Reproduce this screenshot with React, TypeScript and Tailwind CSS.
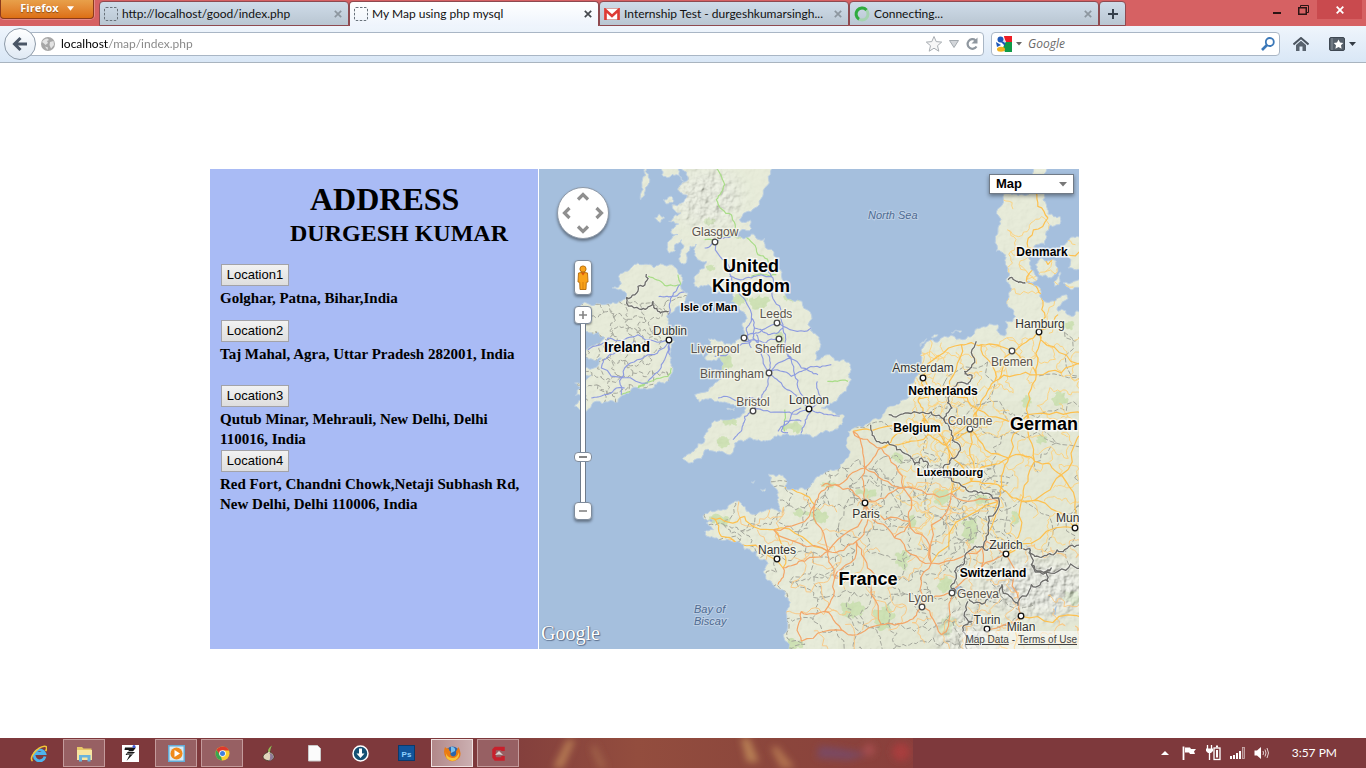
import { useState } from "react";
import type { ReactNode } from "react";

type Pt = [number, number];

/* ---------- map geometry ---------- */

function makeRandom(seed: number) {
  let s = seed;
  return () => {
    s = (s * 16807) % 2147483647;
    return s / 2147483647;
  };
}

function roughen(points: Pt[], amount: number, seed: number, depth: number): Pt[] {
  const rnd = makeRandom(seed * 7919 + 13);
  let pts = points;
  for (let d = 0; d < depth; d++) {
    const next: Pt[] = [];
    for (let i = 0; i < pts.length - 1; i++) {
      const [ax, ay] = pts[i];
      const [bx, by] = pts[i + 1];
      const len = Math.hypot(bx - ax, by - ay);
      const k = (rnd() - 0.5) * amount;
      next.push(pts[i]);
      if (len > 5 && len < 500) next.push([(ax + bx) / 2 - (by - ay) * k, (ay + by) / 2 + (bx - ax) * k]);
    }
    next.push(pts[pts.length - 1]);
    pts = next;
  }
  return pts;
}

const parse = (text: string): Pt[] =>
  text.split(" ").map((pair) => pair.split(",").map(Number) as Pt);

const toPath = (pts: Pt[]) => "M" + pts.map((p) => p[0].toFixed(1) + " " + p[1].toFixed(1)).join("L");

const coast = (text: string, seed: number) => {
  const pts = parse(text);
  return toPath(roughen([...pts, pts[0]], 0.5, seed, 3)) + "Z";
};

const line = (text: string, seed: number, amount = 0.3) => toPath(roughen(parse(text), amount, seed, 3));

const LAND = [
  "430,-10 445,40 420,60 448,82 402,110 428,135 392,160 422,168 398,192 420,200 388,228 395,255 412,248 430,215 438,235 428,285 446,282 456,235 475,228 470,262 505,280 500,300 470,325 480,360 510,350 540,375 575,370 592,366 580,400 612,430 628,450 612,470 618,500 580,530 545,520 512,512 518,532 536,545 500,570 542,568 552,600 540,640 470,680 485,702 520,692 560,702 600,708 628,705 620,735 580,755 530,758 512,780 500,820 470,845 434,872 465,885 500,846 540,850 570,860 590,825 640,810 670,820 700,815 720,800 760,803 800,800 840,800 880,790 912,770 918,742 880,728 850,720 895,700 925,670 940,635 938,600 918,574 868,560 832,577 846,540 835,500 810,470 792,400 742,380 730,320 715,270 680,210 640,198 592,206 640,182 637,156 604,156 650,120 680,60 700,-10",
  "330,290 350,298 400,290 430,320 428,355 450,375 440,410 400,435 386,445 390,480 410,520 400,570 405,600 390,640 350,650 300,660 260,680 210,702 150,724 110,715 145,690 112,682 140,655 110,645 160,620 130,610 190,570 140,570 150,540 200,510 180,492 130,480 135,460 125,440 140,402 200,410 250,400 265,385 222,360 250,345 245,320 275,305 310,290",
  "498,1040 540,1025 575,1010 610,1005 625,1030 660,1035 690,1025 730,1030 720,1000 712,960 692,918 735,922 740,955 770,965 810,960 830,935 870,910 920,880 932,845 930,790 960,775 995,765 1040,735 1060,715 1100,695 1112,650 1150,600 1150,548 1170,520 1220,505 1290,505 1310,490 1330,478 1380,470 1386,500 1404,500 1402,460 1424,460 1428,430 1410,395 1420,360 1405,340 1410,300 1405,270 1375,250 1380,180 1376,130 1400,70 1430,78 1470,80 1498,-10 1537,-10 1530,50 1525,110 1530,138 1566,145 1560,170 1525,190 1520,230 1480,245 1475,290 1500,328 1462,345 1500,355 1510,390 1550,400 1585,380 1590,392 1560,430 1600,445 1640,430 1700,430 1700,1000 1700,1500 1200,1500 745,1500 745,1460 746,1342 750,1290 738,1268 702,1245 676,1210 690,1186 656,1165 655,1150 620,1145 580,1120 530,1110 500,1090 526,1085 505,1065 532,1060 500,1055",
  "1492,290 1510,270 1555,280 1560,310 1530,330 1505,322",
  "1575,240 1595,212 1640,210 1640,302 1590,300",
  "1575,345 1640,335 1640,368 1600,365",
  "1550,340 1568,312 1562,350 1550,355",
  "318,-10 332,30 322,60 308,96 312,52",
  "350,150 365,138 380,150 366,164",
  "375,95 400,85 408,98 385,108",
  "436,40 415,20 372,20 380,-10 420,-10",
  "566,722 590,720 588,729",
  "640,942 650,938 646,946",
  "668,964 682,962 680,970",
  "1146,535 1152,522 1166,512 1160,522",
  "1180,508 1200,500 1196,506",
  "1240,494 1270,488 1268,493",
].map((text, i) => coast(text, i + 3));

const LAKES = "M1232 1268Q1250 1250 1275 1256Q1262 1268 1240 1272ZM1462 1130L1480 1140L1474 1146ZM1545 1330L1556 1312L1552 1342Z";

const CITIES: Record<string, Pt> = {
  paris: [982, 1007], lille: [1030, 840], calais: [945, 790], reims: [1095, 960], metz: [1240, 975],
  lyon: [1152, 1315], dijon: [1180, 1185], orleans: [955, 1120], lemans: [870, 1150], rennes: [707, 1085],
  nantes: [735, 1200], caen: [830, 1010], rouen: [890, 950], tours: [890, 1230], poitiers: [860, 1330],
  brest: [520, 1050], bordeaux: [790, 1420], clermont: [1030, 1370], limoges: [930, 1400], auxerre: [1070, 1110],
  troyes: [1115, 1060], brussels: [1170, 800], cologne: [1298, 785], ruhr: [1320, 725], frankfurt: [1412, 870],
  stuttgart: [1450, 1000], munich: [1612, 1080], zurich: [1405, 1160], bern: [1330, 1200], geneva: [1242, 1275],
  milan: [1450, 1345], turin: [1348, 1385], genoa: [1430, 1450], east: [1640, 1350], hamburg: [1504, 493],
  bremen: [1422, 548], hannover: [1495, 620], amsterdam: [1156, 628], rotterdam: [1140, 695], utrecht: [1190, 665],
  groningen: [1270, 530], arnhem: [1240, 680], leipzig: [1640, 740], kassel: [1470, 740], nuremberg: [1570, 920],
  strasbourg: [1382, 1000], basel: [1345, 1120], karlsruhe: [1390, 960], berlin: [1640, 590], lubeck: [1560, 440],
  quimper: [550, 1105], stbrieuc: [620, 1045], cherbourg: [740, 958], amiens: [980, 900], bourges: [1010, 1220],
  lehavre: [850, 955], angers: [800, 1180], laroche: [720, 1250], osnabruck: [1370, 640], emden: [1330, 530],
  wurzburg: [1490, 880], saar: [1300, 940], liege: [1225, 830], gent: [1100, 790], antwerp: [1160, 750],
  coast: [790, 1330], grenoble: [1210, 1400], stetienne: [1110, 1360], kiel: [1515, 400], flensburg: [1465, 340],
  kolding: [1470, 240], aarhus: [1530, 150], aalborg: [1490, 70], odense: [1530, 290], copenhagen: [1640, 250],
};

const TRUNK = "lille-amiens lille-calais amiens-paris paris-reims reims-metz reims-lille paris-rouen rouen-lehavre rouen-caen paris-orleans orleans-tours tours-poitiers poitiers-coast paris-lemans lemans-rennes lemans-angers angers-nantes lemans-tours orleans-bourges bourges-clermont paris-auxerre auxerre-dijon dijon-lyon dijon-troyes troyes-reims troyes-paris dijon-metz lyon-geneva lyon-stetienne stetienne-clermont lyon-grenoble clermont-limoges limoges-poitiers caen-lemans amiens-rouen amiens-reims metz-strasbourg dijon-basel coast-bordeaux limoges-bordeaux rennes-caen nantes-laroche orleans-lemans troyes-auxerre calais-amiens geneva-grenoble geneva-bern bern-zurich bern-basel basel-zurich zurich-milan turin-milan tours-bourges";

const SECONDARY = "brussels-lille brussels-antwerp brussels-liege liege-cologne gent-lille gent-antwerp antwerp-rotterdam rotterdam-amsterdam amsterdam-utrecht utrecht-arnhem arnhem-ruhr utrecht-rotterdam amsterdam-groningen groningen-emden emden-bremen emden-osnabruck ruhr-cologne ruhr-osnabruck osnabruck-bremen bremen-hamburg hamburg-hannover hannover-osnabruck hannover-kassel kassel-frankfurt ruhr-kassel cologne-frankfurt frankfurt-wurzburg wurzburg-nuremberg nuremberg-munich stuttgart-munich stuttgart-karlsruhe karlsruhe-frankfurt karlsruhe-strasbourg strasbourg-basel stuttgart-wurzburg nuremberg-leipzig leipzig-kassel hannover-berlin hamburg-berlin hamburg-lubeck hamburg-kiel kiel-flensburg flensburg-kolding kolding-aarhus aarhus-aalborg kolding-odense odense-copenhagen metz-saar saar-karlsruhe metz-liege liege-saar cologne-saar munich-zurich milan-genoa milan-east turin-genoa zurich-stuttgart brest-stbrieuc stbrieuc-rennes rennes-nantes brest-quimper quimper-nantes cherbourg-caen rennes-lemans wurzburg-kassel bremen-hannover arnhem-groningen liege-antwerp liege-ruhr gent-calais berlin-leipzig frankfurt-saar stuttgart-nuremberg strasbourg-dijon";

const routes = (text: string, seed: number) =>
  text
    .split(" ")
    .map((edge, i) => {
      const [a, b] = edge.split("-");
      return toPath(roughen([CITIES[a], CITIES[b]], 0.35, seed + i, 3));
    })
    .join("");

const TRUNK_PATH = routes(TRUNK, 40);
const SECONDARY_PATH = routes(SECONDARY, 200);

function mesh(x0: number, y0: number, x1: number, y1: number, step: number, keep: number, seed: number) {
  const rnd = makeRandom(seed);
  const cols = Math.ceil((x1 - x0) / step);
  const rows = Math.ceil((y1 - y0) / step);
  const nodes: Pt[][] = [];
  for (let r = 0; r <= rows; r++) {
    nodes.push([]);
    for (let c = 0; c <= cols; c++) {
      nodes[r].push([x0 + (c + (r % 2) * 0.5 + (rnd() - 0.5) * 0.7) * step, y0 + (r + (rnd() - 0.5) * 0.7) * step]);
    }
  }
  let d = "";
  for (let r = 0; r < rows; r++) {
    for (let c = 0; c < cols; c++) {
      if (rnd() < keep) d += toPath(roughen([nodes[r][c], nodes[r][c + 1]], 0.7, seed + r * 31 + c, 3));
      if (rnd() < keep) d += toPath(roughen([nodes[r][c], nodes[r + 1][c]], 0.7, seed + r * 37 + c + 5, 3));
    }
  }
  return d;
}

const COUNTIES =
  mesh(470, 920, 1390, 1440, 74, 0.72, 91) +
  mesh(130, 400, 400, 700, 44, 0.8, 17) +
  mesh(1150, 500, 1640, 1150, 110, 0.6, 55) +
  mesh(960, 780, 1400, 1000, 90, 0.6, 71);

const MINOR_ROADS =
  mesh(1080, 520, 1640, 1110, 48, 0.5, 23) +
  mesh(1130, 560, 1330, 880, 30, 0.45, 29) +
  mesh(1400, 60, 1560, 480, 60, 0.5, 83);
const MINOR_TRUNKS = mesh(500, 960, 1300, 1440, 70, 0.45, 47) + mesh(1300, 1130, 1640, 1440, 50, 0.45, 63);

const BRITISH_ROADS = [
  "530,222 575,300 600,370 640,450 645,510 690,610", "500,240 530,222 585,200", "575,325 640,330 700,325",
  "690,290 705,330 710,400 735,470 742,530 770,620 800,690", "620,510 660,495 716,465 800,490 830,480",
  "620,520 680,525 723,513", "640,450 625,480 640,540", "690,610 760,570 735,540", "650,480 690,500 735,480",
  "690,610 685,660 670,690 650,725 620,745 612,780 585,815", "690,610 740,660 790,700 820,725",
  "645,725 730,732 820,722", "820,725 870,740 905,745", "820,722 850,690 838,640", "820,722 800,770 790,795",
  "790,760 740,760 730,790 750,795", "790,720 760,740 720,790", "670,690 610,700 540,690", "740,530 790,600 840,620",
  "530,565 590,545 640,520", "655,500 655,540 690,560 690,610", "690,610 760,625 810,600 880,590",
  "395,517 300,500 210,510 150,545", "395,517 340,560 260,600 250,680", "395,517 370,590 330,640", "330,645 190,600 215,560 290,520",
  "390,450 402,385 425,350", "402,385 362,386", "402,385 440,372", "395,517 395,560", "160,690 200,680 260,660",
].map((t, i) => line(t, i + 400)).join("");

const PRIMARY_GREEN = [
  "520,-10 560,50 535,95 580,140 592,200", "620,198 660,260 705,300", "330,325 380,352 430,350 420,320",
  "640,325 715,320", "300,655 390,625 400,600", "868,640 930,640", "740,725 740,790", "250,680 300,660 330,640", "600,205 500,215",
].map((t, i) => line(t, i + 600)).join("");

const FRONTIERS = [
  "998,770 1010,810 1050,820 1110,860 1130,890 1150,870 1170,905 1210,920 1240,930 1285,965 1320,975 1382,990 1350,1070 1336,1140 1300,1145 1280,1180 1250,1210 1240,1262",
  "1052,740 1110,735 1180,732 1220,760 1240,800 1258,825 1240,870 1215,900 1240,930",
  "1315,520 1302,590 1280,610 1302,622 1290,650 1235,685 1242,720 1220,760",
  "1336,1140 1380,1130 1430,1136 1475,1142 1480,1190 1540,1200 1530,1240 1480,1250 1440,1312 1420,1288 1392,1250 1360,1290 1300,1300 1285,1270 1240,1262",
  "1475,1142 1500,1165 1540,1160 1580,1145 1640,1130",
  "1480,1190 1560,1210 1640,1200",
  "1290,1300 1302,1360 1275,1390 1290,1460",
  "1410,335 1435,340 1462,346",
  "325,318 300,355 265,388 310,425 345,400 360,430 392,430",
].map((t, i) => line(t, i + 800, 0.6)).join("");

const WOODS: [number, number, number, number][] = [
  [600, 395, 30, 18], [665, 400, 32, 20], [765, 390, 28, 16], [515, 160, 18, 12], [560, 580, 20, 26], [575, 763, 22, 12],
  [555, 823, 18, 18], [765, 780, 30, 14], [518, 300, 14, 10], [725, 510, 14, 18], [545, 1055, 34, 14], [600, 205, 14, 8],
  [845, 1045, 28, 20], [1080, 870, 18, 14], [1215, 985, 22, 30], [1300, 1085, 22, 40], [1095, 1175, 18, 30],
  [945, 1325, 34, 28], [1040, 1350, 30, 34], [1230, 1375, 26, 34], [1220, 1250, 20, 24], [980, 975, 36, 14],
  [1510, 815, 16, 14], [1565, 690, 24, 22], [1600, 1290, 30, 20], [790, 1035, 26, 12], [1330, 995, 24, 14],
  [1120, 1060, 16, 18], [770, 1430, 30, 14], [1430, 1050, 14, 20], [1590, 470, 20, 14], [1465, 700, 16, 20], [870, 950, 24, 10],
];

const WOODS_PATH = WOODS.map(([cx, cy, rx, ry], i) => {
  const ring: Pt[] = [];
  for (let k = 0; k <= 8; k++) {
    const a = (k / 8) * Math.PI * 2;
    ring.push([cx + Math.cos(a) * rx, cy + Math.sin(a) * ry]);
  }
  return toPath(roughen(ring, 1, i + 900, 2)) + "Z";
}).join("");

/* ---------- map labels ---------- */

const CITY_LABELS: { name: string; x: number; y: number; dot: Pt; strong?: boolean }[] = [
  { name: "Glasgow", x: 176, y: 67, dot: [176, 73] },
  { name: "Leeds", x: 237, y: 149, dot: [238, 154] },
  { name: "Liverpool", x: 176, y: 184, dot: [205, 169] },
  { name: "Sheffield", x: 239, y: 184, dot: [240, 170] },
  { name: "Birmingham", x: 193, y: 209, dot: [230, 204] },
  { name: "Bristol", x: 214, y: 237, dot: [214, 242] },
  { name: "London", x: 270, y: 235, dot: [270, 240], strong: true },
  { name: "Dublin", x: 131, y: 166, dot: [130, 171], strong: true },
  { name: "Hamburg", x: 501, y: 159, dot: [500, 163], strong: true },
  { name: "Bremen", x: 473, y: 197, dot: [473, 182] },
  { name: "Amsterdam", x: 384, y: 203, dot: [384, 209], strong: true },
  { name: "Cologne", x: 431, y: 256, dot: [431, 260] },
  { name: "Paris", x: 327, y: 349, dot: [326, 334], strong: true },
  { name: "Nantes", x: 238, y: 385, dot: [238, 390], strong: true },
  { name: "Zurich", x: 467, y: 380, dot: [467, 385], strong: true },
  { name: "Geneva", x: 439, y: 429, dot: [413, 424] },
  { name: "Lyon", x: 382, y: 433, dot: [383, 438] },
  { name: "Turin", x: 448, y: 455, dot: [448, 460], strong: true },
  { name: "Milan", x: 482, y: 462, dot: [482, 447], strong: true },
];

const COUNTRY_LABELS: { name: string; x: number; y: number; size: string }[] = [
  { name: "United", x: 212, y: 103, size: "text-[18px]" },
  { name: "Kingdom", x: 212, y: 123, size: "text-[18px]" },
  { name: "France", x: 329, y: 416, size: "text-[18px]" },
  { name: "Ireland", x: 88, y: 183, size: "text-[14px]" },
  { name: "Isle of Man", x: 170, y: 142, size: "text-[11px]" },
  { name: "Denmark", x: 503, y: 87, size: "text-[12px]" },
  { name: "Netherlands", x: 404, y: 226, size: "text-[12px]" },
  { name: "Belgium", x: 378, y: 263, size: "text-[12px]" },
  { name: "Luxembourg", x: 411, y: 307, size: "text-[11px]" },
  { name: "Switzerland", x: 454, y: 408, size: "text-[12px]" },
];

function MapArt() {
  return (
    <svg viewBox="0 0 540 480" preserveAspectRatio="xMinYMin slice" className="block h-full w-full font-['Liberation_Sans',sans-serif]" role="img" aria-label="Road map of western Europe">
      <defs>
        <clipPath id="land">
          {LAND.map((d, i) => (
            <path key={i} d={d} />
          ))}
        </clipPath>
        <filter id="relief" x="0" y="0" width="100%" height="100%">
          <feTurbulence type="fractalNoise" baseFrequency="0.05" numOctaves="4" seed="4" />
          <feDiffuseLighting surfaceScale="9" lightingColor="#ffffff">
            <feDistantLight azimuth="225" elevation="48" />
          </feDiffuseLighting>
        </filter>
        <radialGradient id="fade">
          <stop offset="0.4" stopColor="#fff" />
          <stop offset="1" stopColor="#000" />
        </radialGradient>
        <mask id="mountains">
          <rect width="1640" height="1460" fill="#fff" opacity="0.08" />
          <ellipse cx="1510" cy="1260" rx="250" ry="125" fill="url(#fade)" />
          <ellipse cx="510" cy="90" rx="140" ry="120" fill="url(#fade)" opacity="0.6" />
          <ellipse cx="1280" cy="1400" rx="120" ry="120" fill="url(#fade)" opacity="0.7" />
        </mask>
      </defs>
      <rect width="540" height="480" fill="#a5bfdd" />
      <g transform="translate(-1 -1) scale(0.33333)" fill="none" strokeLinejoin="round">
        {LAND.map((d, i) => (
          <path key={i} d={d} fill="#e7ecd9" stroke="#bccfe2" strokeWidth="3" />
        ))}
        <g clipPath="url(#land)">
          <rect x="900" y="700" width="760" height="760" fill="#e2e6d0" opacity="0.6" />
          <path d={WOODS_PATH} fill="#c8dfab" opacity="0.85" />
          <g mask="url(#mountains)">
            <rect x="0" y="0" width="1640" height="1460" filter="url(#relief)" opacity="0.6" />
          </g>
          <path d={LAKES} fill="#a5bfdd" />
          <path d={COUNTIES} stroke="#a4a69c" strokeWidth="3" strokeDasharray="14 6" />
          <path d={MINOR_ROADS} stroke="#fbd383" strokeWidth="3" />
          <path d={MINOR_TRUNKS} stroke="#f8c988" strokeWidth="3" />
          <path d={SECONDARY_PATH} stroke="#fdc04f" strokeWidth="3.6" />
          <path d={TRUNK_PATH} stroke="#f3a568" strokeWidth="3.6" />
          <path d={PRIMARY_GREEN} stroke="#a9dd88" strokeWidth="3.6" />
          <path d={BRITISH_ROADS} stroke="#8d9be0" strokeWidth="3.4" />
          <path d={FRONTIERS} stroke="#fff" strokeWidth="8" opacity="0.5" />
          <path d={FRONTIERS} stroke="#6d6d6a" strokeWidth="4" />
        </g>
      </g>
      {CITY_LABELS.map((c) => (
        <g key={c.name}>
          <circle cx={c.dot[0]} cy={c.dot[1]} r="2.8" fill="#fff" stroke={c.strong ? "#111" : "#444"} strokeWidth="1.3" />
          <text x={c.x} y={c.y} textAnchor="middle" paintOrder="stroke" stroke="#f7f8ee" strokeOpacity="0.8" strokeWidth="2.5" fill={c.strong ? "#333" : "#5b544e"} className="text-[12px]">
            {c.name}
          </text>
        </g>
      ))}
      <circle cx="536" cy="359" r="2.8" fill="#fff" stroke="#111" strokeWidth="1.3" />
      <text x="517" y="353" paintOrder="stroke" stroke="#f7f8ee" strokeOpacity="0.8" strokeWidth="2.5" fill="#333" className="text-[12px]">
        Mun
      </text>
      {COUNTRY_LABELS.map((c) => (
        <text key={c.name} x={c.x} y={c.y} textAnchor="middle" paintOrder="stroke" stroke="#fff" strokeOpacity="0.75" strokeWidth="3" fill="#000" className={"font-bold " + c.size}>
          {c.name}
        </text>
      ))}
      <text x="471" y="261" paintOrder="stroke" stroke="#fff" strokeOpacity="0.75" strokeWidth="3" fill="#000" className="text-[18px] font-bold">
        German
      </text>
      <g fill="#4f6b92" stroke="#c3d4e8" strokeOpacity="0.8" strokeWidth="2" paintOrder="stroke" className="text-[11px] italic">
        <text x="329" y="50">North Sea</text>
        <text x="155" y="444">Bay of</text>
        <text x="155" y="456">Biscay</text>
      </g>
    </svg>
  );
}

/* ---------- map controls ---------- */

function PanButton({ label, d, place }: { label: string; d: string; place: string }) {
  return (
    <button aria-label={label} className={"flex items-center justify-center " + place}>
      <svg viewBox="0 0 14 14" className="size-3.5">
        <path d={d} fill="none" stroke="#8f8f8f" strokeWidth="3.2" />
      </svg>
    </button>
  );
}

function MapPanel() {
  const [zoom, setZoom] = useState(5);
  return (
    <section aria-label="Map" className="relative min-w-0 flex-1 overflow-hidden font-['Liberation_Sans',sans-serif]">
      <MapArt />
      <div className="absolute top-[18px] left-[18px] flex w-[52px] flex-col items-center">
        <div className="grid size-[52px] grid-cols-3 grid-rows-3 rounded-full border border-[#8f9aa8] bg-white p-px shadow-[0_2px_3px_rgba(0,0,0,0.4)]">
          <PanButton label="Pan up" d="M2 9.5L7 4.5L12 9.5" place="col-start-2 row-start-1" />
          <PanButton label="Pan left" d="M9.5 2L4.5 7L9.5 12" place="col-start-1 row-start-2" />
          <PanButton label="Pan right" d="M4.5 2L9.5 7L4.5 12" place="col-start-3 row-start-2" />
          <PanButton label="Pan down" d="M2 4.5L7 9.5L12 4.5" place="col-start-2 row-start-3" />
        </div>
        <button aria-label="Street View" className="mt-[21px] flex h-[35px] w-[18px] items-center justify-center rounded-sm border border-[#7f8c9c] bg-white shadow-[0_2px_3px_rgba(0,0,0,0.4)]">
          <svg viewBox="0 0 12 26" className="h-[26px] w-3">
            <g fill="#f9a31a" stroke="#b36a08" strokeWidth="0.9">
              <path d="M1.5 8Q6 6.500 10.500 8L11 17L9.300 17.300L9 24.500H3L2.700 17.300L1 17Z" />
              <circle cx="6" cy="4" r="3.100" />
            </g>
            <path d="M4 7.800L6 10.500L8 7.800Z" fill="#d9570b" />
            <path d="M6 17V24.500" stroke="#d27a0b" strokeWidth="0.800" />
          </svg>
        </button>
        <button aria-label="Zoom in" onClick={() => setZoom(Math.min(21, zoom + 1))} className="mt-[11px] flex size-[18px] items-center justify-center rounded-sm border border-[#7f8c9c] bg-white shadow-[0_1px_2px_rgba(0,0,0,0.4)]">
          <svg viewBox="0 0 8 8" className="size-2">
            <path d="M4 0V8M0 4H8" stroke="#858585" strokeWidth="1.600" />
          </svg>
        </button>
        <input
          type="range"
          aria-label="Zoom level"
          min={0}
          max={21}
          value={zoom}
          onChange={(e) => setZoom(Number(e.target.value))}
          className="h-[178px] w-[18px] appearance-none bg-[linear-gradient(90deg,#6f7b8b_1px,#fff_1px,#fff_5px,#6f7b8b_5px)] bg-[length:6px_100%] bg-center bg-no-repeat [direction:rtl] [writing-mode:vertical-lr] [&::-webkit-slider-thumb]:h-2.5 [&::-webkit-slider-thumb]:w-[18px] [&::-webkit-slider-thumb]:appearance-none [&::-webkit-slider-thumb]:rounded-sm [&::-webkit-slider-thumb]:border [&::-webkit-slider-thumb]:border-[#7f8c9c] [&::-webkit-slider-thumb]:bg-white [&::-webkit-slider-thumb]:bg-[linear-gradient(#858585,#858585)] [&::-webkit-slider-thumb]:bg-[length:8px_2px] [&::-webkit-slider-thumb]:bg-center [&::-webkit-slider-thumb]:bg-no-repeat"
        />
        <button aria-label="Zoom out" onClick={() => setZoom(Math.max(0, zoom - 1))} className="flex size-[18px] items-center justify-center rounded-sm border border-[#7f8c9c] bg-white shadow-[0_2px_3px_rgba(0,0,0,0.4)]">
          <svg viewBox="0 0 8 8" className="size-2">
            <path d="M0 4H8" stroke="#858585" strokeWidth="1.600" />
          </svg>
        </button>
      </div>
      <div className="absolute top-[5px] right-[5px] flex h-5 w-[85px] items-center border border-[#717b87] bg-white shadow-[0_2px_4px_rgba(0,0,0,0.4)]">
        <select aria-label="Map type" className="h-full w-full appearance-none bg-transparent pl-1.5 text-[13px] leading-4 font-bold text-black">
          <option>Map</option>
        </select>
        <svg viewBox="0 0 8 5" className="pointer-events-none absolute right-1.5 h-[5px] w-2">
          <path d="M0 0H8L4 4.500Z" fill="#777" />
        </svg>
      </div>
      <span className="absolute bottom-1 left-0.5 font-['Liberation_Serif',serif] text-[20px] leading-6 text-white [text-shadow:0_0_1px_#4a5d78,1px_1px_1px_#5c6f8c]">Google</span>
      <div className="absolute right-0 bottom-0 flex gap-[3px] bg-white/50 px-0.5 text-[10px] leading-[18px] text-[#444]">
        <a href="#map-data" className="underline">Map Data</a>
        <span>-</span>
        <a href="#terms" className="underline">Terms of Use</a>
      </div>
    </section>
  );
}

/* ---------- address panel ---------- */

const PLACES = [
  { button: "Location1", address: "Golghar, Patna, Bihar,India", box: "min-h-14" },
  { button: "Location2", address: "Taj Mahal, Agra, Uttar Pradesh 282001, India", box: "min-h-[65px]" },
  { button: "Location3", address: "Qutub Minar, Mehrauli, New Delhi, Delhi 110016, India", box: "min-h-[65px]" },
  { button: "Location4", address: "Red Fort, Chandni Chowk,Netaji Subhash Rd, New Delhi, Delhi 110006, India", box: "min-h-[65px]" },
];

function AddressPanel() {
  return (
    <section className="w-[328px] shrink-0 bg-[#a9bbf5] pt-3 pr-2 pl-2.5 font-['Liberation_Serif',serif] font-bold text-black">
      <h1 className="pl-[90px] text-[32px] leading-9">ADDRESS</h1>
      <h2 className="pl-[70px] text-[24px] leading-8 whitespace-nowrap">DURGESH KUMAR</h2>
      <ul className="pt-[15px]">
        {PLACES.map((p) => (
          <li key={p.button} className={p.box}>
            <button className="ml-px flex h-[22px] w-[68px] items-center justify-center border border-[#a3a3a8] bg-linear-to-b from-[#f2f2f2] to-[#dedede] font-['Liberation_Sans',sans-serif] text-[13px] font-normal">
              {p.button}
            </button>
            <p className="pt-0.5 text-[15px] leading-5">{p.address}</p>
          </li>
        ))}
      </ul>
    </section>
  );
}

/* ---------- browser chrome ---------- */

function BlankIcon() {
  return (
    <svg viewBox="0 0 14 14" className="size-3.5 shrink-0">
      <rect x="0.500" y="0.500" width="13" height="13" rx="1.500" fill="none" stroke="#6a737c" strokeDasharray="2.500 1.500" />
    </svg>
  );
}

function GmailIcon() {
  return (
    <svg viewBox="0 0 16 12" className="h-3 w-4 shrink-0">
      <rect x="0.500" y="0.500" width="15" height="11" fill="#fff" stroke="#d9a3a0" />
      <path d="M1.500 12V2L8 8L14.500 2V12" fill="none" stroke="#dd3b35" strokeWidth="2.600" />
    </svg>
  );
}

function SpinnerIcon() {
  return (
    <svg viewBox="0 0 16 16" className="size-4 shrink-0" fill="none" strokeWidth="3">
      <circle cx="8" cy="8" r="6" stroke="#a5d3b0" />
      <path d="M12.500 4A6 6 0 1 0 5 13.200" stroke="#2fab3f" />
    </svg>
  );
}

const TABS: { title: string; icon: ReactNode; active?: boolean }[] = [
  { title: "http://localhost/good/index.php", icon: <BlankIcon /> },
  { title: "My Map using php mysql", icon: <BlankIcon />, active: true },
  { title: "Internship Test - durgeshkumarsingh...", icon: <GmailIcon /> },
  { title: "Connecting...", icon: <SpinnerIcon /> },
];

function TitleBar() {
  return (
    <header className="flex h-[26px] bg-[#d66163]">
      <button className="flex h-[19px] w-[94px] shrink-0 items-center justify-center gap-2 rounded-b-sm border border-t-0 border-[#8c3a1b] bg-linear-to-b from-[#e8a04a] to-[#dc6f13] pb-px font-['Open_Sans',sans-serif] text-[11px] font-bold text-white shadow-[0_0_0_1px_#e38a86] [text-shadow:0_1px_1px_#8a4a10]">
        Firefox
        <svg viewBox="0 0 8 5" className="h-[5px] w-[7px]">
          <path d="M0 0H8L4 5Z" fill="#fff" />
        </svg>
      </button>
      <div role="tablist" className="ml-[5px] flex min-w-0 flex-1 items-end">
        {TABS.map((t) => (
          <div
            key={t.title}
            className={
              "flex w-[250px] min-w-0 items-center rounded-t-sm border-x border-t border-[#8e4a50] pr-0.5 pl-1 " +
              (t.active ? "h-[25px] bg-linear-to-b from-white to-[#eef4fc]" : "h-[25px] border-b bg-linear-to-b from-[#cfdce9] to-[#b9c6d2]")
            }
          >
            <button role="tab" aria-selected={!!t.active} className="flex min-w-0 flex-1 items-center gap-1 text-[#111]">
              {t.icon}
              <span className="whitespace-nowrap">{t.title}</span>
            </button>
            <button aria-label={"Close " + t.title} className="flex size-4 shrink-0 items-center justify-center">
              <svg viewBox="0 0 8 8" className="size-2">
                <path d="M0.800 0.800L7.200 7.200M7.200 0.800L0.800 7.200" stroke={t.active ? "#45494e" : "#8c969f"} strokeWidth="1.700" />
              </svg>
            </button>
          </div>
        ))}
        <button aria-label="New tab" className="flex h-[25px] w-[27px] shrink-0 items-center justify-center rounded-t-sm border border-[#8e4a50] bg-linear-to-b from-[#cfdce9] to-[#b9c6d2]">
          <svg viewBox="0 0 10 10" className="size-2.5">
            <path d="M5 0V10M0 5H10" stroke="#35404c" strokeWidth="2" />
          </svg>
        </button>
      </div>
      <div className="flex shrink-0 items-start">
        <button aria-label="Minimize" className="flex h-[19px] w-[26px] items-center justify-center pt-1.5">
          <span className="h-0.5 w-2 bg-[#2b1414]" />
        </button>
        <button aria-label="Restore" className="flex h-[19px] w-[27px] items-center justify-center">
          <svg viewBox="0 0 11 10" className="h-2.5 w-[11px]" fill="none" stroke="#2b1414">
            <path d="M2.500 2V0.500H10.500V7.500H8.500" />
            <rect x="0.750" y="2.750" width="7.500" height="6.500" strokeWidth="1.500" />
          </svg>
        </button>
        <button aria-label="Close window" className="mr-1 flex h-[19px] w-[45px] items-center justify-center bg-[#c94a4e]">
          <svg viewBox="0 0 8 8" className="size-2">
            <path d="M0.700 0.700L7.300 7.300M7.300 0.700L0.700 7.300" stroke="#fff" strokeWidth="1.800" />
          </svg>
        </button>
      </div>
    </header>
  );
}

function Toolbar() {
  return (
    <div className="flex h-[37px] items-center border-b border-[#a9b4bf] bg-linear-to-b from-[#eff5fc] to-[#d9e7f6] pr-2.5 pl-1">
      <button aria-label="Back" className="z-10 -mr-2 flex size-8 shrink-0 items-center justify-center rounded-full border border-[#8d9aa8] bg-linear-to-b from-white to-[#dfe9f4]">
        <svg viewBox="0 0 16 16" className="size-4">
          <path d="M15 8H3M8.500 2L2.500 8L8.500 14" fill="none" stroke="#4a5666" strokeWidth="3" />
        </svg>
      </button>
      <div className="flex h-6 min-w-0 flex-1 items-center rounded-sm border border-[#a9b6c5] bg-white pr-1 pl-3">
        <svg viewBox="0 0 14 14" className="size-3.5 shrink-0">
          <circle cx="7" cy="7" r="7" fill="#a7a7a7" />
          <path d="M1 5Q3 1.500 6.500 1.500L8 3L6 4L7 6L4.500 8L3 6.500ZM9 5L12.500 4L13 8L10 11.500L8.500 8ZM4 9.500L7 10.500L6.500 13Z" fill="#e4e4e4" />
        </svg>
        <input
          aria-label="Address"
          defaultValue="localhost/map/index.php"
          className="ml-1.5 min-w-0 flex-1 bg-[linear-gradient(90deg,#000_48px,#858585_48px)] bg-clip-text leading-5 text-transparent caret-black outline-none"
        />
        <button aria-label="Bookmark this page">
          <svg viewBox="0 0 18 18" className="size-[18px]">
            <path d="M9 1.500L11.200 6.600L16.700 7.100L12.500 10.700L13.800 16.200L9 13.200L4.200 16.200L5.500 10.700L1.300 7.100L6.800 6.600Z" fill="#f7f7f7" stroke="#a8adb2" />
          </svg>
        </button>
        <button aria-label="History" className="ml-1.5">
          <svg viewBox="0 0 10 8" className="h-2 w-2.5">
            <path d="M0.500 0.500H9.500L5 7.500Z" fill="#d3d6da" stroke="#a3a9ae" />
          </svg>
        </button>
        <button aria-label="Reload" className="ml-1.5">
          <svg viewBox="0 0 14 14" className="size-3.5">
            <path d="M11.500 9.500A4.800 4.800 0 1 1 10.500 3.300" fill="none" stroke="#8f979f" strokeWidth="2.200" />
            <path d="M12.500 0.500V6.500H6.500Z" fill="#8f979f" />
          </svg>
        </button>
      </div>
      <form className="ml-[7px] flex h-6 w-[289px] items-center rounded-sm border border-[#a9b6c5] bg-white px-1" onSubmit={(e) => e.preventDefault()}>
        <svg viewBox="0 0 16 16" className="size-4 shrink-0">
          <rect width="16" height="16" fill="#fff" />
          <path d="M8 0H16V7H9Z" fill="#ed1c24" />
          <path d="M9 6H16V16H9L7 12Z" fill="#109a48" />
          <path d="M0 6L5 9L1 11Z" fill="#1d57b8" />
          <circle cx="4.500" cy="3.500" r="3" fill="#1d57b8" />
          <path d="M5 6L9.500 5.500L9 10Z" fill="#1d57b8" />
          <path d="M8 1.500L10 6L8.500 7Z" fill="#fff" />
          <ellipse cx="5" cy="13.300" rx="4" ry="2.500" fill="#f2b21c" />
        </svg>
        <svg viewBox="0 0 6 4" className="ml-1 h-1 w-1.5 shrink-0">
          <path d="M0 0H6L3 3.500Z" fill="#666" />
        </svg>
        <input aria-label="Search the web" placeholder="Google" className="ml-1.5 min-w-0 flex-1 bg-transparent font-['Open_Sans',sans-serif] italic outline-none placeholder:text-[#6a6a6a]" />
        <button aria-label="Search">
          <svg viewBox="0 0 14 14" className="size-3.5" fill="none" stroke="#3b78b8">
            <circle cx="8.800" cy="5" r="4" strokeWidth="1.800" />
            <path d="M6 8L1 13" strokeWidth="2.600" />
          </svg>
        </button>
      </form>
      <button aria-label="Home" className="ml-[13px]">
        <svg viewBox="0 0 16 14" className="h-3.5 w-4">
          <path d="M0.500 7.500L8 1L15.500 7.500" fill="none" stroke="#4b545f" strokeWidth="2" />
          <path d="M3 8L8 3.700L13 8V14H9.500V9.500H6.500V14H3Z" fill="#59636e" />
        </svg>
      </button>
      <button aria-label="Bookmarks" className="ml-5 flex items-center gap-1">
        <svg viewBox="0 0 16 14" className="h-3.5 w-4">
          <rect x="0.500" y="0.500" width="15" height="13" rx="1.500" fill="#56606b" stroke="#3f4852" />
          <path d="M3 1V13" stroke="#8a939d" />
          <path d="M9.500 2.500L11 5.600L14.300 6L12 8.300L12.600 11.700L9.500 10L6.400 11.700L7 8.300L4.700 6L8 5.600Z" fill="#fff" />
        </svg>
        <svg viewBox="0 0 7 4" className="h-1 w-[7px]">
          <path d="M0 0H7L3.500 4Z" fill="#333b44" />
        </svg>
      </button>
    </div>
  );
}

/* ---------- taskbar ---------- */

const APPS: { name: string; state?: "open" | "front"; art: ReactNode }[] = [
  {
    name: "Internet Explorer",
    art: (
      <>
        <path d="M15 11.500A5.500 5.500 0 1 1 14.800 8.500H5" fill="none" stroke="#4db4ee" strokeWidth="2.800" />
        <path d="M2.500 16C-1.500 13 7 2 14.500 1.200C17.500 1 16.800 4.500 15.500 6" fill="none" stroke="#f3c737" strokeWidth="1.600" />
      </>
    ),
  },
  {
    name: "File Explorer",
    state: "open",
    art: (
      <>
        <path d="M1 2H6L7.500 3.500H15.500V14H1Z" fill="#e7c868" />
        <path d="M1 5H16V15H1Z" fill="#f7e6a1" />
        <path d="M3 16.500V10H14.500V16.500H11.500V12.500H6V16.500Z" fill="#68b4dd" />
      </>
    ),
  },
  {
    name: "Winamp",
    art: (
      <>
        <rect width="17" height="17" fill="#fff" />
        <path d="M3 2.500H14L10.500 7H13L4.500 16L7.500 10H3.500L7 5H2.500Z" fill="#151515" />
        <circle cx="12" cy="1.500" r="1.500" fill="#4058d8" />
        <path d="M5 6.500H14M5 9H12" stroke="#fff" strokeWidth="0.700" />
      </>
    ),
  },
  {
    name: "Media Player",
    state: "open",
    art: (
      <>
        <rect x="0.750" y="0.750" width="15.500" height="15.500" fill="#d9ecf6" stroke="#63abd6" strokeWidth="1.500" />
        <circle cx="8.500" cy="8.500" r="6" fill="#f08a1c" />
        <path d="M6.500 5L12 8.500L6.500 12Z" fill="#fff" />
      </>
    ),
  },
  {
    name: "Chrome",
    state: "open",
    art: (
      <>
        <circle cx="8.500" cy="8.500" r="7" fill="#f9cf2e" />
        <path d="M2.500 5A7 7 0 0 1 15 5.500H8.500L5.500 10Z" fill="#dd3a2d" />
        <path d="M2.500 5L7 11.500L8 15.500A7 7 0 0 1 2.500 5Z" fill="#3ba650" />
        <circle cx="8.500" cy="8.500" r="3.300" fill="#fff" />
        <circle cx="8.500" cy="8.500" r="2.500" fill="#3d7fe0" />
      </>
    ),
  },
  {
    name: "Tor Browser",
    art: (
      <>
        <path d="M8 7Q8 3 11.500 1.500Q10 4 10 7Q15.500 10 13.500 13.500Q8.500 18 3.500 13.500Q1.500 10 8 7Z" fill="#e2d6bd" stroke="#35301f" strokeWidth="0.700" />
        <path d="M9 7.500Q15 10 13 13.500Q11.500 15.500 9 16Q11.500 11 9 7.500Z" fill="#8f7a98" />
        <path d="M8 6.500Q8 3 12 0.500Q10 4 10 7Z" fill="#9aba56" />
      </>
    ),
  },
  {
    name: "Document",
    art: <path d="M2.500 0.500H11.500L14.500 3.500V16H2.500Z" fill="#fbfbfb" stroke="#c9c9c9" />,
  },
  {
    name: "Downloader",
    art: (
      <>
        <circle cx="8.500" cy="8.500" r="7.500" fill="#155073" stroke="#fff" strokeWidth="1.500" />
        <path d="M7 3.500H10V8.500H12.500L8.500 13L4.500 8.500H7Z" fill="#fff" />
      </>
    ),
  },
  {
    name: "Photoshop",
    art: (
      <>
        <rect x="0.500" y="0.500" width="16" height="15" fill="#11559c" stroke="#0b3a6c" />
        <text x="8.500" y="11.500" textAnchor="middle" fill="#8fd1ff" className="text-[8px] font-bold">Ps</text>
      </>
    ),
  },
  {
    name: "Firefox",
    state: "front",
    art: (
      <>
        <circle cx="8.500" cy="8.500" r="7" fill="#2b66ac" />
        <path d="M7 1.500Q12 2 11 6L7 8Z" fill="#7cc0ea" />
        <path d="M1 2Q2.500 4 5 3.500Q4.500 6 7 7Q5 10.500 9 11.500Q13 11 12 6.500L14.500 2Q18 8 15.500 12.500Q9 19.500 2.500 13.500Q-1.500 8.500 1 2Z" fill="#ea7a12" />
        <path d="M1.500 6Q2 12 8 13Q13 13.500 15 7Q16 13 11 15.500Q5.500 17 2.500 13Z" fill="#f9c43a" />
      </>
    ),
  },
  {
    name: "Camtasia",
    state: "open",
    art: (
      <>
        <path d="M13 6V3.500H5.500L4 5V12L5.500 14H13V11" fill="none" stroke="#c8202c" strokeWidth="3.500" />
        <path d="M5 10L9 6L13 10L9 9.500Z" fill="#d9d5d3" />
      </>
    ),
  },
];

const APP_STATE = {
  idle: "border-transparent",
  open: "border-[#c49b9c] bg-white/20",
  front: "border-[#f0e2e2] bg-linear-to-r from-white/40 to-white/60",
};

function Taskbar() {
  return (
    <footer className="flex h-[30px] items-center bg-[#7e393c] pl-[17px]">
      <nav aria-label="Applications" className="flex shrink-0 gap-1">
        {APPS.map((a) => (
          <button key={a.name} aria-label={a.name} className={"flex h-7 w-[42px] items-center justify-center border " + APP_STATE[a.state ?? "idle"]}>
            <svg viewBox="0 0 17 17" className="size-[17px] font-['Liberation_Sans',sans-serif]">
              {a.art}
            </svg>
          </button>
        ))}
      </nav>
      <svg viewBox="0 0 394 30" preserveAspectRatio="none" className="h-full w-[394px] shrink-0" aria-hidden="true">
        <defs>
          <linearGradient id="wall">
            <stop offset="0" stopColor="#84403d" />
            <stop offset="0.300" stopColor="#934d3e" />
            <stop offset="0.650" stopColor="#8b463c" />
            <stop offset="1" stopColor="#8a3f3c" />
          </linearGradient>
          <filter id="haze" x="-40%" y="-40%" width="180%" height="180%">
            <feGaussianBlur stdDeviation="3.500" />
          </filter>
        </defs>
        <rect width="394" height="30" fill="url(#wall)" />
        <g filter="url(#haze)">
          <path d="M48 2L34 30H44L56 2Z" fill="#b67a52" />
          <path d="M72 10L80 30H88L76 6Z" fill="#a0624a" />
          <path d="M222 0L228 24H240L230 0Z" fill="#b98055" />
          <path d="M252 10L262 30H276L258 8Z" fill="#b27350" />
          <path d="M300 8L318 10L350 16L330 22L298 20Z" fill="#7a4862" />
          <circle cx="350" cy="12" r="6" fill="#a54d4e" />
          <circle cx="382" cy="14" r="9" fill="#a83c3e" />
        </g>
      </svg>
      <div className="flex min-w-0 flex-1 items-center justify-end pr-[29px] text-white">
        <button aria-label="Show hidden icons">
          <svg viewBox="0 0 8 4" className="h-1 w-2">
            <path d="M0 4L4 0L8 4Z" fill="#fff" />
          </svg>
        </button>
        <svg viewBox="0 0 14 14" className="ml-[13px] size-3.5" aria-label="Action center" role="img">
          <path d="M1.500 0.500V14" stroke="#fff" strokeWidth="1.800" />
          <path d="M3 1.500H8L9 3H14L12 5.500L13 8H8L7 6.500H3Z" fill="#fff" />
        </svg>
        <svg viewBox="0 0 15 16" className="ml-2.5 h-4 w-[15px]" aria-label="Battery" role="img" fill="none" stroke="#fff">
          <path d="M1.500 0V4M5.500 0V4M3.500 7V15" strokeWidth="1.300" />
          <path d="M0 3.500H7V6L5 8H2L0 6Z" fill="#fff" stroke="none" />
          <rect x="8" y="3" width="6" height="11.500" strokeWidth="1.300" />
          <path d="M10 1.500H12M11 5V12.500" strokeWidth="2" />
        </svg>
        <svg viewBox="0 0 16 12" className="ml-[9px] h-3 w-4" aria-label="Network" role="img" fill="#fff">
          <rect y="9" width="2" height="3" />
          <rect x="3" y="8" width="2" height="4" />
          <rect x="6" y="6" width="2" height="6" />
          <rect x="9" y="4" width="2" height="8" />
          <rect x="12.500" y="0.500" width="2" height="11" fill="#9b6365" stroke="#cfb4b5" strokeWidth="0.800" />
        </svg>
        <svg viewBox="0 0 16 14" className="ml-2 h-3.5 w-4" aria-label="Volume" role="img">
          <path d="M0.500 4.500H3L7 1V13L3 9.500H0.500Z" fill="#fff" />
          <path d="M9 5Q10 7 9 9M11 3.500Q13 7 11 10.500M13 2Q16 7 13 12" fill="none" stroke="#e6d2d2" />
        </svg>
        <time className="ml-[22px] whitespace-nowrap">3:57 PM</time>
      </div>
    </footer>
  );
}

export default function App() {
  return (
    <div className="flex min-h-screen flex-col bg-white font-['Lato','Noto_Sans',sans-serif] text-[12px]">
      <TitleBar />
      <Toolbar />
      <main className="flex-1 pt-[106px] pl-[210px]">
        <div className="flex h-[480px] max-w-[869px] gap-px">
          <AddressPanel />
          <MapPanel />
        </div>
      </main>
      <Taskbar />
    </div>
  );
}
